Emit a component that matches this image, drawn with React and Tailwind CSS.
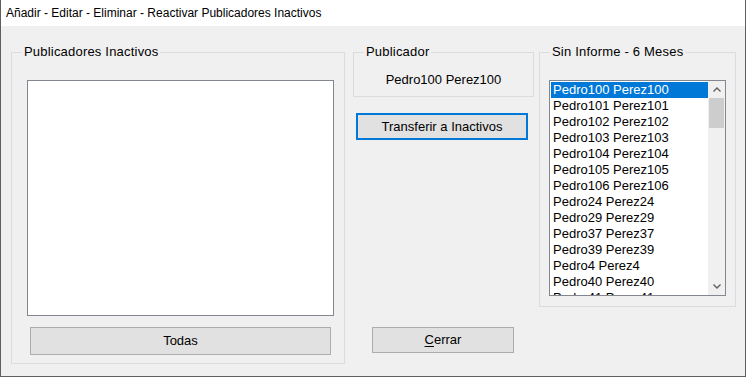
import React from "react";

const names = [
  "Pedro100 Perez100",
  "Pedro101 Perez101",
  "Pedro102 Perez102",
  "Pedro103 Perez103",
  "Pedro104 Perez104",
  "Pedro105 Perez105",
  "Pedro106 Perez106",
  "Pedro24 Perez24",
  "Pedro29 Perez29",
  "Pedro37 Perez37",
  "Pedro39 Perez39",
  "Pedro4 Perez4",
  "Pedro40 Perez40",
  "Pedro41 Perez41",
];

// group box with the caption sitting on the top border
function GroupBox({ title, className, children }) {
  return (
    <div className={`relative border border-[#dcdcdc] ${className}`}>
      <span className="absolute -top-[9px] left-[10px] bg-[#f0f0f0] px-[2px] text-[13px] leading-[16px] tracking-[0.2px] text-black">
        {title}
      </span>
      {children}
    </div>
  );
}

function Chevron({ up }) {
  return (
    <svg width="8" height="5" viewBox="0 0 8 5" className="text-[#606060]">
      <path
        d={up ? "M0.5 4.5 L4 1 L7.5 4.5" : "M0.5 0.5 L4 4 L7.5 0.5"}
        stroke="currentColor"
        strokeWidth="1.4"
        fill="none"
      />
    </svg>
  );
}

export default function App() {
  return (
    <div
      className="w-[746px] h-[377px] flex flex-col border-x border-b border-[#5f5f5f] bg-[#f0f0f0] overflow-hidden"
      style={{ fontFamily: "'Liberation Sans', Arial, sans-serif" }}
    >
      {/* Title bar */}
      <div className="h-[26px] bg-white flex items-center pl-[5px]">
        <span className="text-[12px] text-black">
          Añadir - Editar - Eliminar - Reactivar Publicadores Inactivos
        </span>
      </div>

      {/* Body */}
      <div className="flex-1 flex items-start pl-[10px] pt-[26px]">
        {/* Publicadores Inactivos */}
        <GroupBox
          title="Publicadores Inactivos"
          className="w-[334px] h-[312px] flex flex-col"
        >
          <div className="ml-[15px] mt-[27px] w-[307px] h-[236px] bg-white border border-[#828790]" />
          <button className="ml-[18px] mt-[11px] w-[301px] h-[28px] bg-[#e1e1e1] border border-[#adadad] text-[13px] text-black">
            Todas
          </button>
        </GroupBox>

        {/* Middle column */}
        <div className="ml-[8px] w-[181px] flex flex-col">
          <GroupBox title="Publicador" className="w-[181px] h-[45px]">
            <div className="pt-[19px] text-center text-[13px] leading-[16px] text-black">
              Pedro100 Perez100
            </div>
          </GroupBox>
          <button className="ml-[3px] mt-[16px] w-[172px] h-[27px] bg-[#e1e1e1] border-2 border-[#0078d7] text-[13px] text-black">
            Transferir a Inactivos
          </button>
          <button className="ml-[19px] mt-[187px] w-[142px] h-[26px] bg-[#e1e1e1] border border-[#adadad] text-[13px] text-black">
            <span className="underline underline-offset-2">C</span>errar
          </button>
        </div>

        {/* Sin Informe - 6 Meses */}
        <GroupBox title="Sin Informe - 6 Meses" className="ml-[5px] w-[197px] h-[255px]">
          <div className="ml-[9px] mt-[27px] w-[177px] h-[216px] bg-white border border-[#828790] flex overflow-hidden">
            <div className="flex-1 pt-[1px] pl-[1px] overflow-hidden">
              {names.map((n, i) => (
                <div
                  key={n}
                  className={`h-[16px] pl-[2px] text-[13px] leading-[16px] whitespace-nowrap ${
                    i === 0 ? "bg-[#0078d7] text-white" : "text-black"
                  }`}
                >
                  {n}
                </div>
              ))}
            </div>
            <div className="w-[17px] bg-[#f0f0f0] flex flex-col">
              <div className="h-[17px] flex items-center justify-center">
                <Chevron up />
              </div>
              <div className="h-[30px] mx-[1px] bg-[#cdcdcd]" />
              <div className="flex-1" />
              <div className="h-[17px] flex items-center justify-center">
                <Chevron />
              </div>
            </div>
          </div>
        </GroupBox>
      </div>
    </div>
  );
}
